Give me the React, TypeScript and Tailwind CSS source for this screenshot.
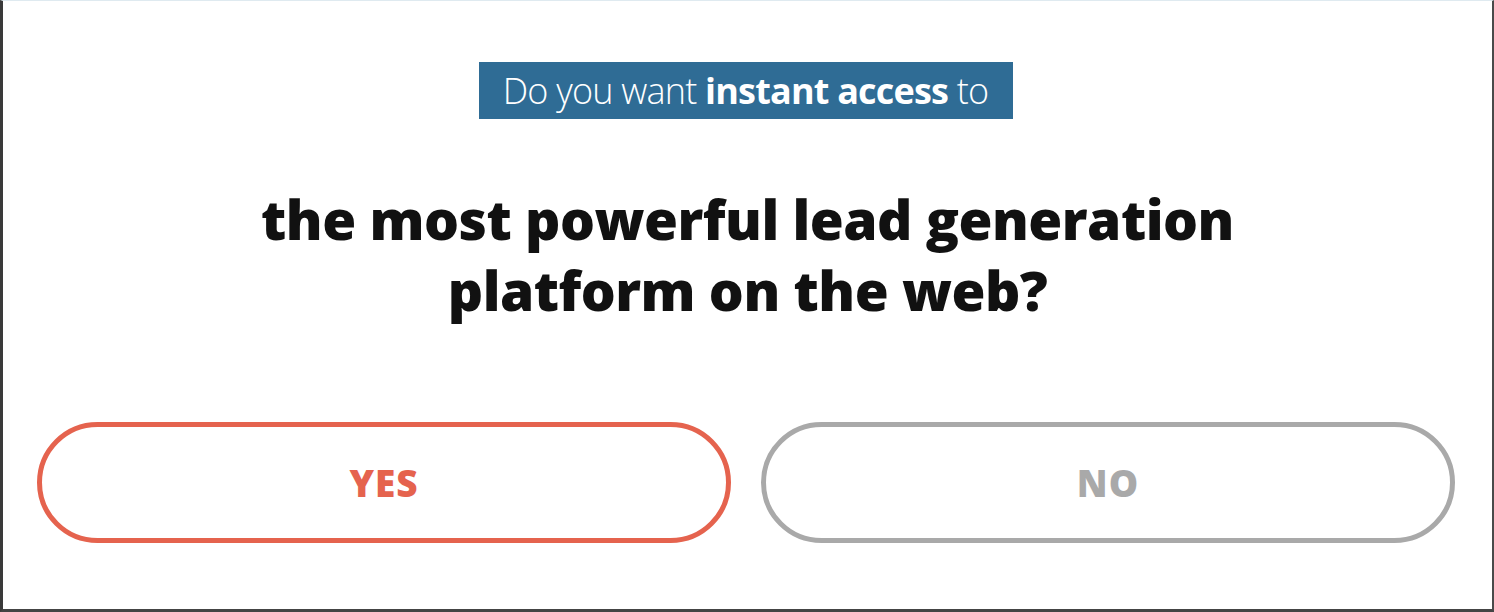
export default function App() {
  return (
    <div className="h-[612px] w-[1494px] bg-white" style={{ fontFamily: '"Open Sans", sans-serif' }}>
      <div className="flex h-full flex-col items-center border-t border-t-[#dfeaf0] border-l-[3px] border-l-[#3a3a3a] border-r-2 border-r-[#4a4a4a] border-b-[3px] border-b-[#444]">
        <div className="mt-[61px] ml-[-4px] flex h-[57px] w-[534px] items-center justify-center bg-[#2f6c95] text-[36px] tracking-[-0.8px] text-white">
          <span className="font-light">Do you want&nbsp;</span>
          <span className="font-bold">instant access</span>
          <span className="font-light">&nbsp;to</span>
        </div>
        <h1 className="mt-[64px] text-center text-[55px] font-extrabold leading-[71px] tracking-[-0.5px] text-[#111]">
          the most powerful lead generation
          <br />
          platform on the web?
        </h1>
        <div className="mt-[97px] flex w-full gap-[30px] pl-[34px] pr-[37px]">
          <button className="flex h-[121px] flex-1 items-center justify-center rounded-full border-[5px] border-[#e5634e] text-[37px] font-extrabold tracking-[1px] text-[#e5634e]">
            YES
          </button>
          <button className="flex h-[121px] flex-1 items-center justify-center rounded-full border-[5px] border-[#a9a9a9] text-[37px] font-extrabold tracking-[1px] text-[#a9a9a9]">
            NO
          </button>
        </div>
      </div>
    </div>
  );
}
